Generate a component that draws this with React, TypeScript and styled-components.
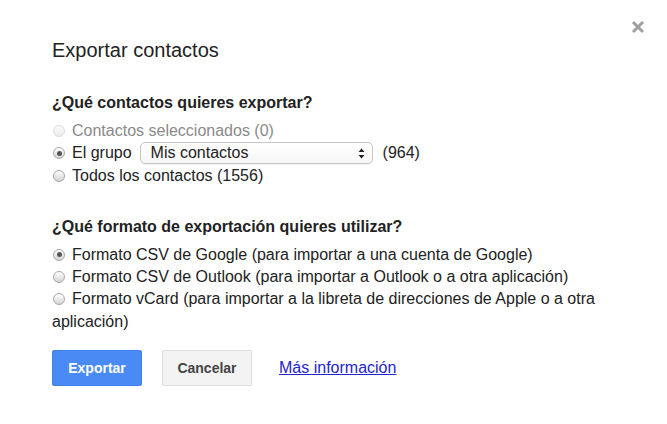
import { FC } from "react";
import styled, { createGlobalStyle } from "styled-components";

const GlobalStyle = createGlobalStyle`
  html, body {
    margin: 0;
    padding: 0;
    background: #ffffff;
  }

  body {
    font-family: "Liberation Sans", Arial, sans-serif;
    color: #222222;
  }
`;

const Dialog = styled.div`
  position: relative;
  width: 667px;
  height: 424px;
  box-sizing: border-box;
  padding: 38px 52px 0 52px;
  background: #ffffff;
`;

const Close = styled.button`
  position: absolute;
  top: 20px;
  right: 22px;
  width: 14px;
  height: 14px;
  padding: 0;
  border: 0;
  background: transparent;
  cursor: pointer;
`;

const Title = styled.h1`
  margin: 0;
  font-size: 20px;
  line-height: 24px;
  font-weight: normal;
  color: #222222;
`;

const Question = styled.h2<{ first?: boolean }>`
  margin: ${({ first }) => (first ? "31px 0 7px" : "30px 0 7px")};
  font-size: 16px;
  line-height: 20px;
  font-weight: bold;
  color: #222222;
`;

const Option = styled.label<{ disabled?: boolean }>`
  display: block;
  font-size: 16px;
  line-height: 22.3px;
  color: ${({ disabled }) => (disabled ? "#8a8a8a" : "#222222")};
  cursor: ${({ disabled }) => (disabled ? "default" : "pointer")};
`;

const Radio = styled.span<{ checked?: boolean; disabled?: boolean }>`
  position: relative;
  display: inline-block;
  width: 12px;
  height: 12px;
  margin: 0 7px 0 1px;
  box-sizing: border-box;
  border-radius: 50%;
  vertical-align: -1px;
  border: 1px solid ${({ disabled }) => (disabled ? "#dcdcdc" : "#a9a9a9")};
  background: ${({ disabled }) =>
    disabled
      ? "linear-gradient(#fafafa, #ececec)"
      : "linear-gradient(#ffffff, #d3d3d3)"};

  &::after {
    content: "";
    display: ${({ checked }) => (checked ? "block" : "none")};
    position: absolute;
    left: 2.5px;
    top: 2.5px;
    width: 5px;
    height: 5px;
    border-radius: 50%;
    background: #555555;
  }
`;

const Select = styled.span`
  display: inline-flex;
  align-items: center;
  justify-content: space-between;
  box-sizing: border-box;
  width: 233px;
  height: 22px;
  margin: 0 10px 0 8px;
  padding: 0 7px 0 10px;
  line-height: 20px;
  border: 1px solid #c4c4c4;
  border-radius: 5px;
  background: linear-gradient(#ffffff, #f7f7f7);
  box-shadow: 0 1px 1px rgba(0, 0, 0, 0.06);
  color: #222222;
`;

const Footer = styled.div`
  display: flex;
  align-items: center;
  margin-top: 17px;
  gap: 20px;
`;

const Button = styled.button<{ primary?: boolean }>`
  width: 90px;
  height: 36px;
  padding: 0;
  border-radius: 2px;
  font-family: "Liberation Sans", Arial, sans-serif;
  font-size: 14px;
  font-weight: bold;
  cursor: pointer;
  border: 1px solid ${({ primary }) => (primary ? "#3f82ef" : "#dcdcdc")};
  background: ${({ primary }) => (primary ? "#4a8af4" : "#f3f3f3")};
  color: ${({ primary }) => (primary ? "#ffffff" : "#444444")};
`;

const MoreLink = styled.a`
  margin-left: 7px;
  font-size: 16px;
  color: #2424d0;
  text-decoration: underline;
`;

const Arrows: FC = () => (
  <svg width="7" height="11" viewBox="0 0 7 11">
    <path d="M3.5 0.5 L6.5 4 L0.5 4 Z" fill="#222" />
    <path d="M3.5 10.5 L6.5 7 L0.5 7 Z" fill="#222" />
  </svg>
);

const App: FC = () => {
  return (
    <>
      <GlobalStyle />
      <Dialog>
        <Close aria-label="Cerrar">
          <svg width="14" height="14" viewBox="0 0 14 14">
            <path
              d="M2 2 L12 12 M12 2 L2 12"
              stroke="#a0a0a0"
              strokeWidth="3"
              strokeLinecap="butt"
            />
          </svg>
        </Close>

        <Title>Exportar contactos</Title>

        <Question first>¿Qué contactos quieres exportar?</Question>
        <Option disabled>
          <Radio disabled />
          Contactos seleccionados (0)
        </Option>
        <Option>
          <Radio checked />
          El grupo
          <Select>
            Mis contactos
            <Arrows />
          </Select>
          (964)
        </Option>
        <Option>
          <Radio />
          Todos los contactos (1556)
        </Option>

        <Question>¿Qué formato de exportación quieres utilizar?</Question>
        <Option>
          <Radio checked />
          Formato CSV de Google (para importar a una cuenta de Google)
        </Option>
        <Option>
          <Radio />
          Formato CSV de Outlook (para importar a Outlook o a otra aplicación)
        </Option>
        <Option>
          <Radio />
          Formato vCard (para importar a la libreta de direcciones de Apple o a
          otra aplicación)
        </Option>

        <Footer>
          <Button primary>Exportar</Button>
          <Button>Cancelar</Button>
          <MoreLink href="#">Más información</MoreLink>
        </Footer>
      </Dialog>
    </>
  );
};

export default App;
